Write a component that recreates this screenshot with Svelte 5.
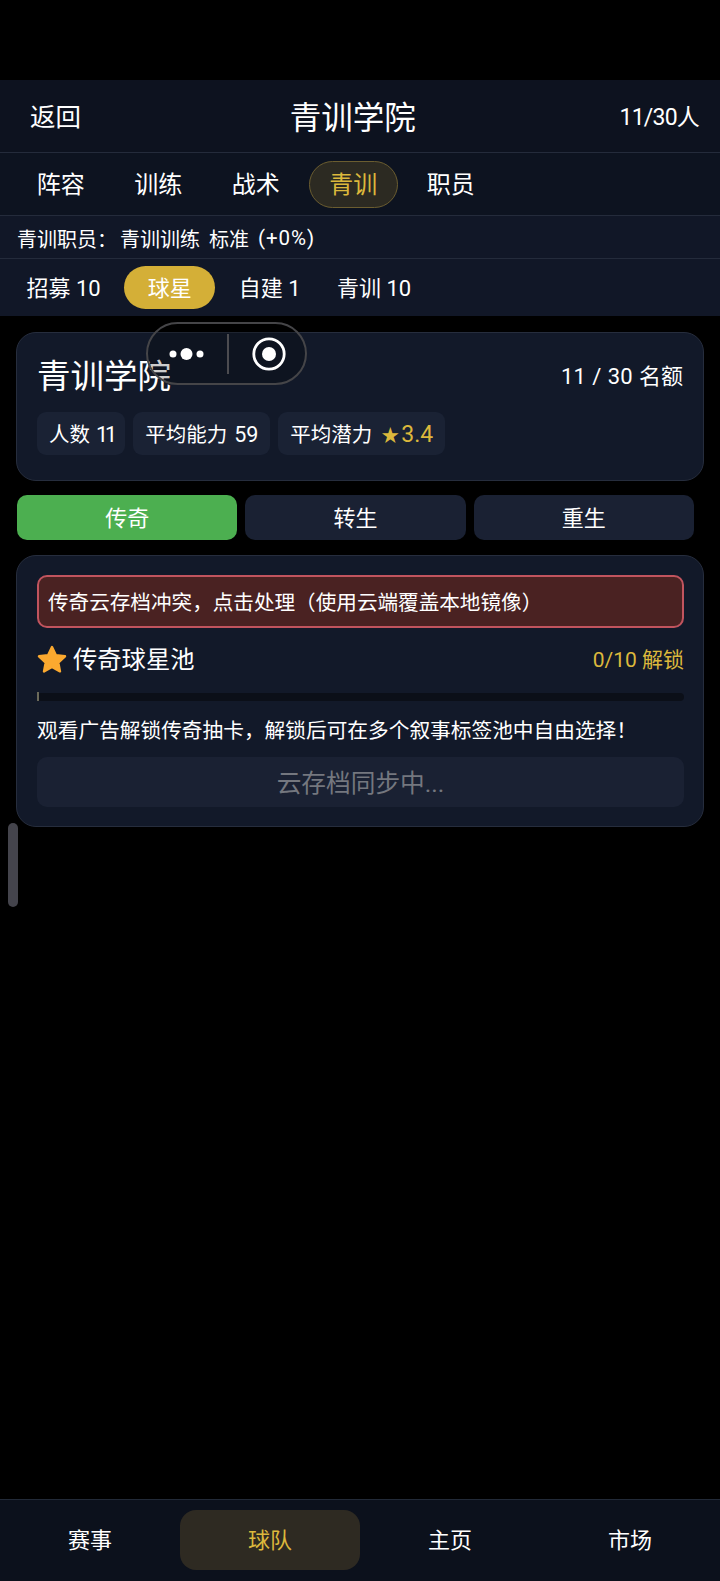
<script>
  const tabs = ['阵容', '训练', '战术', '青训', '职员'];
  const subs = ['招募 10', '球星', '自建 1', '青训 10'];
  const modes = ['传奇', '转生', '重生'];
  const nav = ['赛事', '球队', '主页', '市场'];
</script>

<div class="page">
  <header class="top">
    <span class="back">返回</span>
    <span class="heading">青训学院</span>
    <span class="count">11/30人</span>
  </header>

  <nav class="tabs">
    {#each tabs as t}
      <span class="tab" class:on={t === '青训'}>{t}</span>
    {/each}
  </nav>

  <div class="info"><span class="info-label">青训职员：</span>青训训练 标准 <span class="pct">(+0%)</span></div>

  <nav class="subs">
    {#each subs as s}
      <span class="sub" class:on={s === '球星'}>{s}</span>
    {/each}
  </nav>

  <main class="content">
    <section class="card summary">
      <div class="summary-head">
        <span class="summary-title">青训学院</span>
        <span class="quota">11 / 30 名额</span>
      </div>
      <div class="chips">
        <span class="chip">人数 <b class="tight">11</b></span>
        <span class="chip">平均能力 <b>59</b></span>
        <span class="chip">平均潜力 <em><i>★</i>3.4</em></span>
      </div>
    </section>

    <div class="modes">
      {#each modes as m}
        <span class="mode" class:on={m === '传奇'}>{m}</span>
      {/each}
    </div>

    <section class="card pool">
      <div class="alert">传奇云存档冲突，点击处理（使用云端覆盖本地镜像）</div>
      <div class="pool-head">
        <span class="pool-title">
          <svg class="star" viewBox="0 0 30 28" aria-hidden="true">
            <path d="M15 2 L18.9 10.2 L28 11.3 L21.3 17.5 L23 26.4 L15 22 L7 26.4 L8.7 17.5 L2 11.3 L11.1 10.2 Z" fill="#fba92f" stroke="#fba92f" stroke-width="2.4" stroke-linejoin="round"/>
          </svg>
          <span class="pool-name">传奇球星池</span>
        </span>
        <span class="progress-label">0/10 解锁</span>
      </div>
      <div class="bar"><span class="fill"></span></div>
      <p class="desc">观看广告解锁传奇抽卡，解锁后可在多个叙事标签池中自由选择！</p>
      <div class="sync">云存档同步中...</div>
    </section>
  </main>

  <footer class="bottom">
    {#each nav as n}
      <span class="nav-item" class:on={n === '球队'}>{n}</span>
    {/each}
  </footer>

  <div class="capsule">
    <svg class="dots" viewBox="0 0 36 12" aria-hidden="true">
      <circle cx="4" cy="6" r="3.5" fill="#fff"/>
      <circle cx="17.5" cy="6" r="6" fill="#fff"/>
      <circle cx="31" cy="6" r="3.5" fill="#fff"/>
    </svg>
    <span class="divider"></span>
    <svg class="ring" viewBox="0 0 36 36" aria-hidden="true">
      <circle cx="18" cy="18" r="15.2" fill="none" stroke="#fff" stroke-width="2.8"/>
      <circle cx="18" cy="18" r="7" fill="#fff"/>
    </svg>
  </div>
  <div class="scrollbar"></div>
</div>

<style>
  :global(body) { margin: 0; background: #000; }
  .page {
    position: relative;
    width: 720px;
    height: 1581px;
    padding-top: 80px;
    box-sizing: border-box;
    display: flex;
    flex-direction: column;
    background: #000;
    color: #fff;
    font-family: Roboto, "Noto Sans CJK SC", sans-serif;
    font-weight: 400;
    overflow: hidden;
  }
  .top {
    height: 73px;
    padding: 0 21px 3px 30px;
    box-sizing: border-box;
    display: flex;
    align-items: center;
    justify-content: space-between;
    background: #0d121f;
    border-bottom: 1px solid #242b3b;
  }
  .back { font-size: 25.5px; }
  .heading { font-size: 31.5px; }
  .count { font-size: 23px; letter-spacing: -0.8px; margin-left: -5px; }
  .tabs {
    height: 63px;
    padding: 0 16px;
    box-sizing: border-box;
    display: flex;
    align-items: center;
    gap: 8px;
    background: #0d1320;
    border-bottom: 1px solid #242b3b;
  }
  .tab {
    width: 89.5px;
    height: 47px;
    box-sizing: border-box;
    display: flex;
    align-items: center;
    justify-content: center;
    padding-bottom: 3px;
    font-size: 24px;
    border-radius: 24px;
    border: 1px solid transparent;
  }
  .tab.on {
    color: #dcb83c;
    background: #2c2a22;
    border-color: #6b5d30;
  }
  .info {
    height: 43px;
    padding: 2px 0 0 17px;
    display: flex;
    align-items: center;
    white-space: pre;
    font-size: 20px;
    word-spacing: 4px;
    background: #111727;
    border-bottom: 1px solid #242b3b;
    box-sizing: border-box;
  }
  .info-label { margin-right: 3px; }
  .pct { font-size: 20.5px; letter-spacing: 1px; }
  .subs {
    height: 57px;
    padding: 0 3px;
    box-sizing: border-box;
    display: flex;
    align-items: center;
    background: #111727;
  }
  .sub {
    height: 43px;
    box-sizing: border-box;
    padding: 0 23.5px 3px;
    display: flex;
    align-items: center;
    font-size: 22px;
    border-radius: 22px;
  }
  .sub:nth-child(3) { padding-right: 13px; }
  .sub.on { background: #d4af37; }
  .content {
    padding: 16px 16px 0;
    display: flex;
    flex-direction: column;
    gap: 15px;
  }
  .card {
    width: 688px;
    box-sizing: border-box;
    background: #121929;
    border: 1px solid #262d3d;
    border-radius: 20px;
  }
  .summary { height: 149px; padding: 14px 20px; }
  .summary-head {
    height: 60px;
    display: flex;
    align-items: center;
    justify-content: space-between;
  }
  .summary-title { font-size: 33.5px; padding-bottom: 8px; }
  .quota { font-size: 22px; padding-bottom: 6px; word-spacing: 1px; }
  .chips { display: flex; gap: 8px; margin-top: 5px; }
  .chip {
    height: 43px;
    box-sizing: border-box;
    padding: 0 12px 2px;
    display: flex;
    align-items: center;
    gap: 7px;
    font-size: 20.5px;
    background: #1a2234;
    border-radius: 9px;
  }
  .chip b { font-weight: 400; font-size: 21.5px; padding-top: 3px; }
  .chip b.tight { letter-spacing: -3px; margin-left: -1px; margin-right: -1px; }
  .chip em {
    font-style: normal;
    font-size: 23px;
    color: #dcb83c;
    display: flex;
    align-items: center;
    gap: 2px;
    margin-left: 2px;
    padding-top: 3px;
  }
  .chip i { font-style: normal; font-size: 18px; }
  .modes { display: flex; gap: 8px; width: 677px; margin-top: -1px; margin-left: 1px; }
  .mode {
    flex: 1;
    height: 45px;
    box-sizing: border-box;
    padding-bottom: 3px;
    display: flex;
    align-items: center;
    justify-content: center;
    font-size: 22px;
    background: #1a2133;
    border-radius: 10px;
  }
  .mode.on { background: #4caf50; }
  .pool { height: 272px; padding: 19px 19px 0 20px; }
  .alert {
    height: 53px;
    box-sizing: border-box;
    padding: 0 9px 2px;
    display: flex;
    align-items: center;
    font-size: 20.6px;
    background: #4a2222;
    border: 2px solid #c1545e;
    border-radius: 10px;
  }
  .pool-head {
    height: 56px;
    margin-top: 3px;
    display: flex;
    align-items: center;
    justify-content: space-between;
  }
  .pool-title { display: flex; align-items: center; gap: 6px; font-size: 24.3px; }
  .pool-name { padding-bottom: 4px; }
  .star { width: 30px; height: 28px; }
  .progress-label { font-size: 21px; color: #dcb83c; padding-bottom: 2px; }
  .bar {
    height: 8px;
    margin-top: 6px;
    background: #0b0f18;
    border-radius: 4px;
  }
  .fill { display: block; width: 2px; height: 9px; position: relative; top: -1px; background: #6b6a5a; }
  .desc { margin: 15px 0 0; height: 32px; line-height: 30px; font-size: 20.7px; }
  .sync {
    height: 50px;
    margin-top: 9px;
    box-sizing: border-box;
    padding-bottom: 2px;
    display: flex;
    align-items: center;
    justify-content: center;
    font-size: 24.7px;
    color: #74777f;
    background: #1a2133;
    border-radius: 10px;
  }
  .bottom {
    margin-top: auto;
    height: 82px;
    box-sizing: border-box;
    padding-top: 10px;
    display: grid;
    grid-template-columns: repeat(4, 180px);
    align-items: start;
    background: #0c111c;
    border-top: 1px solid #222a38;
  }
  .nav-item {
    height: 60px;
    box-sizing: border-box;
    padding-bottom: 5px;
    display: flex;
    align-items: center;
    justify-content: center;
    font-size: 22px;
    border-radius: 16px;
  }
  .nav-item.on { color: #dcb83c; background: #2e2a22; }
  .capsule {
    position: absolute;
    left: 146px;
    top: 322px;
    width: 161px;
    height: 63px;
    box-sizing: border-box;
    border: 2px solid #454548;
    border-radius: 32px;
    background: rgba(0, 0, 0, 0.2);
  }
  .dots { position: absolute; left: 21px; top: 24px; width: 36px; height: 12px; }
  .divider { position: absolute; left: 79px; top: 10px; width: 2px; height: 40px; background: #4c4c50; }
  .ring { position: absolute; left: 103px; top: 12px; width: 36px; height: 36px; }
  .scrollbar {
    position: absolute;
    left: 8px;
    top: 823px;
    width: 10px;
    height: 84px;
    border-radius: 5px;
    background: #44444c;
  }
</style>
